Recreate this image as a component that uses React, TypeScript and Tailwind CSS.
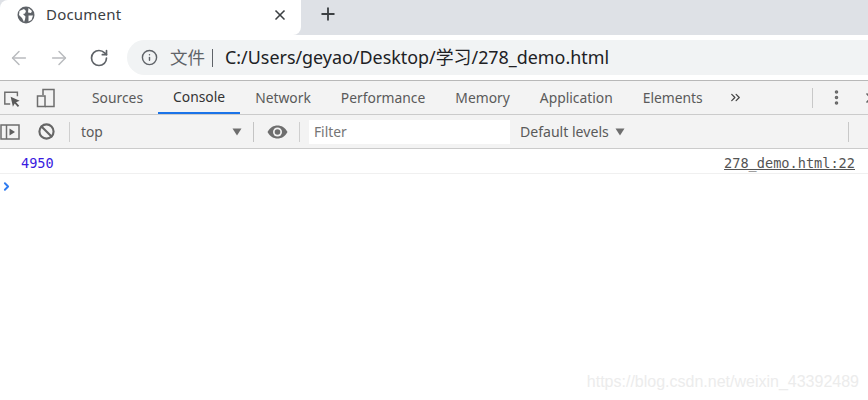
import { ArrowLeft, ArrowRight, RotateCw, Info, Ban, ChevronsRight, ChevronRight, EllipsisVertical, X, Plus } from "lucide-react";

const tabs = ["Sources", "Console", "Network", "Performance", "Memory", "Application", "Elements"];

function Globe() {
  return (
    <svg width="18" height="18" viewBox="0 0 18 18" className="shrink-0">
      <circle cx="9" cy="9" r="8.5" fill="#5f6368" />
      <path d="M2.500 5 L7 3 L9 5 L8 7.500 L6 8 L8.500 10.500 L8 13.500 L7 16 L5 12 L2 9 Z" fill="#fff" />
      <path d="M11.500 2 L15 5 L14 7 L11 6.500 Z M11.500 9.500 L16 9.500 L14.500 14 L11.500 15.500 Z" fill="#fff" />
    </svg>
  );
}

function Inspect() {
  return (
    <svg width="18" height="18" viewBox="0 0 20 20" className="shrink-0">
      <path d="M8 15.500 H2 V2.500 H16 V7" fill="none" stroke="#6e6e6e" strokeWidth="1.600" />
      <path d="M8.500 7.500 L18.500 12 L14.500 13.500 L18 17.500 L16.500 19 L13 15 L11 18.500 Z" fill="#5a5a5a" />
    </svg>
  );
}

function Device() {
  return (
    <svg width="20" height="20" viewBox="0 0 20 20" className="shrink-0">
      <path d="M7 7 V1.500 H18 V18.500 H9" fill="none" stroke="#6e6e6e" strokeWidth="1.500" />
      <rect x="1.500" y="8" width="7.500" height="10.500" fill="none" stroke="#6e6e6e" strokeWidth="1.500" />
    </svg>
  );
}

function SidebarToggle() {
  return (
    <svg width="20" height="16" viewBox="0 0 20 16" className="shrink-0">
      <rect x="1" y="1" width="18" height="14" fill="none" stroke="#6e6e6e" strokeWidth="1.500" />
      <path d="M6.500 1 V15" stroke="#6e6e6e" strokeWidth="1.500" />
      <path d="M9.500 4.500 L15 8 L9.500 11.500 Z" fill="#5f5f5f" />
    </svg>
  );
}

function EyeSolid() {
  return (
    <svg width="21" height="14" viewBox="0 0 21 14" className="shrink-0">
      <path d="M0.500 7 C3 2.500 6.500 0.500 10.500 0.500 C14.500 0.500 18 2.500 20.500 7 C18 11.500 14.500 13.500 10.500 13.500 C6.500 13.500 3 11.500 0.500 7 Z" fill="#6e6e6e" />
      <circle cx="10.500" cy="7" r="4.500" fill="#f3f3f3" />
      <circle cx="10.500" cy="7" r="2.800" fill="#6e6e6e" />
    </svg>
  );
}

function Caret({ className }: { className: string }) {
  return (
    <svg width="10" height="8" viewBox="0 0 10 8" className={className}>
      <path d="M0.500 0.500 H9.500 L5 7.500 Z" fill="#6e6e6e" />
    </svg>
  );
}

export default function App() {
  return (
    <div className="w-[868px] h-[400px] overflow-hidden bg-white relative font-['Noto_Sans','Noto_Sans_CJK_SC',sans-serif]">
      {/* Tab strip */}
      <div className="flex h-[35px] bg-[#dee1e6]">
        <div className="flex items-center w-[301px] h-full bg-white pl-[17px] pr-[13px] pb-[6px] rounded-tl-lg rounded-br-lg">
          <Globe />
          <span className="ml-[11px] text-[15px] text-[#3c4043] tracking-[0.2px]">Document</span>
          <X size={16} strokeWidth={2.500} className="ml-auto text-[#3c4043]" />
        </div>
        <Plus size={20} strokeWidth={2.200} className="ml-[17px] mt-[4px] text-[#3c4043]" />
      </div>

      {/* Address row */}
      <div className="flex items-center h-[45px] pt-[5px] pb-[5px]">
        <ArrowLeft size={22} strokeWidth={1.600} className="ml-[8px] text-[#b9bbbe]" />
        <ArrowRight size={22} strokeWidth={1.600} className="ml-[18px] text-[#b9bbbe]" />
        <RotateCw size={20} strokeWidth={2} className="ml-[19px] text-[#5f6368]" />
        <div className="flex flex-1 items-center h-[35px] ml-[18px] bg-[#f1f3f4] rounded-l-full pl-[14px]">
          <Info size={17} strokeWidth={2} className="text-[#5f6368]" />
          <span className="ml-[12px] text-[17.500px] text-[#5f6368] font-['Noto_Sans_CJK_SC',sans-serif]">文件</span>
          <span className="ml-[7px] w-px h-[18px] bg-[#5f6368]" />
          <span className="ml-[12px] text-[17.900px] text-[#202124]">C:/Users/geyao/Desktop/学习/278_demo.html</span>
        </div>
      </div>

      {/* Devtools tabs */}
      <div className="flex items-center h-[35px] bg-[#f3f3f3] border-t-[1.500px] border-b border-[#b8b8b8] border-b-[#cbcbcb]">
        <div className="ml-[3px] mt-[2px]"><Inspect /></div>
        <div className="ml-[15px]"><Device /></div>
        <span className="ml-[13px] w-px h-[19px] bg-[#cfcfcf]" />
        <div className="flex h-full ml-[8px] shrink-0">
          {tabs.map((t) => (
            <div
              key={t}
              className={`flex items-center h-full px-[15px] pt-[1px] text-[13.850px] ${t === "Console" ? "text-[#333] border-b-2 border-[#1a73e8]" : "text-[#5a5a5a]"}`}
            >
              {t}
            </div>
          ))}
        </div>
        <ChevronsRight size={15} strokeWidth={2} className="ml-[10px] shrink-0 text-[#444]" />
        <span className="ml-[69px] w-px h-[20px] shrink-0 bg-[#c8c8c8]" />
        <EllipsisVertical size={19} strokeWidth={2.500} className="ml-[14px] shrink-0 text-[#666]" />
        <X size={16} strokeWidth={2.500} className="ml-[17px] shrink-0 text-[#666]" />
      </div>

      {/* Console toolbar */}
      <div className="flex items-center h-[34px] bg-[#f3f3f3] border-b border-[#cbcbcb]">
        <SidebarToggle />
        <Ban size={17} strokeWidth={3} className="ml-[18px] shrink-0 text-[#666]" />
        <span className="ml-[14px] w-px h-[20px] bg-[#cfcfcf]" />
        <span className="ml-[11px] pt-[1px] text-[13.850px] text-[#5a5a5a]">top</span>
        <Caret className="ml-[129px] shrink-0" />
        <span className="ml-[11px] w-px h-[20px] bg-[#c4c4c4]" />
        <div className="ml-[13px]"><EyeSolid /></div>
        <span className="ml-[11px] w-px h-[20px] bg-[#cfcfcf]" />
        <div className="flex items-center w-[201px] h-[24px] ml-[9px] pt-[1px] bg-white pl-[5px] text-[13.850px] text-[#757575]">Filter</div>
        <span className="ml-[10px] text-[14.100px] text-[#5a5a5a]">Default levels</span>
        <Caret className="ml-[6px] shrink-0" />
        <span className="ml-[223px] w-px h-[20px] shrink-0 bg-[#c8c8c8]" />
      </div>

      {/* Console output */}
      <div className="flex items-center justify-between h-[25px] pt-[4px] pl-[21px] pr-[13px] border-b border-[#f0f0f0] font-['DejaVu_Sans_Mono',monospace] text-[13.600px]">
        <span className="text-[#3a1ce0]">4950</span>
        <span className="text-[#545454] underline">278_demo.html:22</span>
      </div>
      <div className="flex items-center h-[24px] pl-[0px]">
        <ChevronRight size={13} strokeWidth={3.500} className="text-[#2f7bf0]" />
      </div>

      {/* Watermark */}
      <span className="absolute right-[9px] top-[370px] text-[16px] text-[#ececec] font-['Liberation_Sans',sans-serif]">https://blog.csdn.net/weixin_43392489</span>
    </div>
  );
}
